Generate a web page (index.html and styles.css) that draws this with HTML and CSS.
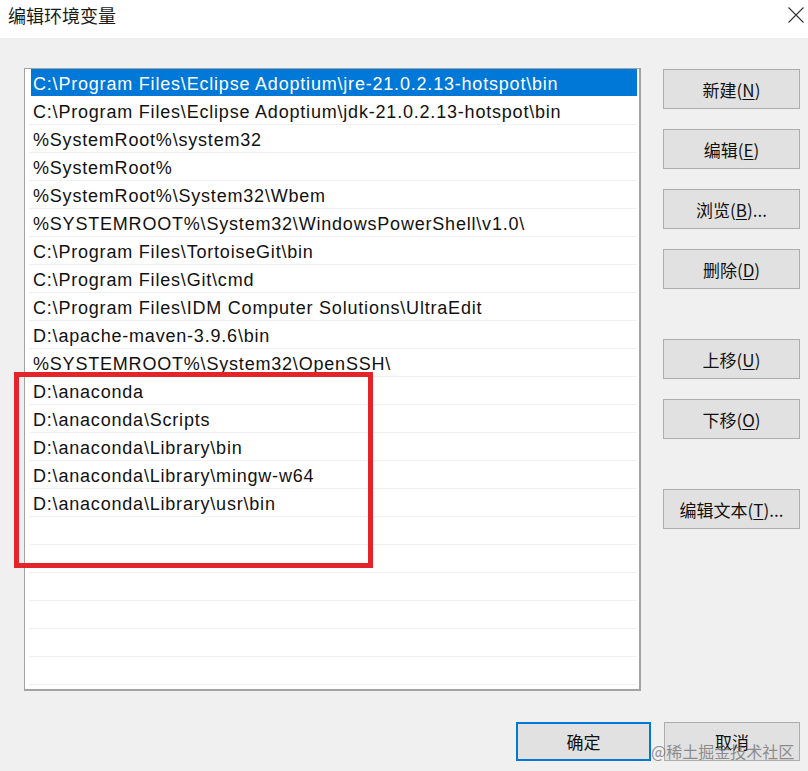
FILE: index.html
```html
<!DOCTYPE html>
<html lang="zh">
<head>
<meta charset="utf-8">
<title>编辑环境变量</title>
<link rel="stylesheet" href="styles.css">
</head>
<body>
<div class="window">
  <div class="titlebar">
    <span class="title">编辑环境变量</span>
    <svg class="close" width="16" height="16" viewBox="0 0 16 16"><path d="M0.5 0.5 L15.5 15.5 M15.5 0.5 L0.5 15.5" stroke="#333" stroke-width="1.1" fill="none"/></svg>
  </div>
  <div class="body">
    <div class="main">
      <div class="list">
        <div class="row selected">C:\Program Files\Eclipse Adoptium\jre-21.0.2.13-hotspot\bin</div>
        <div class="row">C:\Program Files\Eclipse Adoptium\jdk-21.0.2.13-hotspot\bin</div>
        <div class="row">%SystemRoot%\system32</div>
        <div class="row">%SystemRoot%</div>
        <div class="row">%SystemRoot%\System32\Wbem</div>
        <div class="row">%SYSTEMROOT%\System32\WindowsPowerShell\v1.0\</div>
        <div class="row">C:\Program Files\TortoiseGit\bin</div>
        <div class="row">C:\Program Files\Git\cmd</div>
        <div class="row">C:\Program Files\IDM Computer Solutions\UltraEdit</div>
        <div class="row">D:\apache-maven-3.9.6\bin</div>
        <div class="row">%SYSTEMROOT%\System32\OpenSSH\</div>
        <div class="row">D:\anaconda</div>
        <div class="row">D:\anaconda\Scripts</div>
        <div class="row">D:\anaconda\Library\bin</div>
        <div class="row">D:\anaconda\Library\mingw-w64</div>
        <div class="row">D:\anaconda\Library\usr\bin</div>
        <div class="row"></div>
        <div class="row"></div>
        <div class="row"></div>
        <div class="row"></div>
        <div class="row"></div>
        <div class="row"></div>
        <div class="row"></div>
      </div>
      <div class="buttons">
        <div class="group">
          <button class="btn">新建(<u>N</u>)</button>
          <button class="btn">编辑(<u>E</u>)</button>
          <button class="btn">浏览(<u>B</u>)...</button>
          <button class="btn">删除(<u>D</u>)</button>
        </div>
        <div class="group">
          <button class="btn">上移(<u>U</u>)</button>
          <button class="btn">下移(<u>O</u>)</button>
        </div>
        <div class="group">
          <button class="btn">编辑文本(<u>T</u>)...</button>
        </div>
      </div>
    </div>
    <div class="footer">
      <button class="btn default">确定</button>
      <button class="btn">取消</button>
    </div>
    <div class="highlight"></div>
    <div class="watermark">@稀土掘金技术社区</div>
  </div>
</div>
</body>
</html>
```
FILE: styles.css
```css
* { box-sizing: border-box; }
html, body {
  margin: 0;
  padding: 0;
  width: 808px;
  height: 771px;
  overflow: hidden;
  background: #f0f0f0;
}
.window {
  width: 808px;
  height: 771px;
  display: flex;
  flex-direction: column;
  font-family: "Liberation Sans", "Noto Sans CJK SC", sans-serif;
}
.titlebar {
  height: 38px;
  background: #ffffff;
  display: flex;
  align-items: center;
  justify-content: space-between;
  padding: 0 4px 0 8px;
  flex-shrink: 0;
}
.title {
  font-family: "Noto Sans CJK SC", sans-serif;
  font-size: 18px;
  color: #1a1a1a;
  margin-top: -9px;
}
.close {
  margin-top: -8px;
}
.body {
  position: relative;
  flex: 1;
  background: #f0f0f0;
  padding: 30px 0 0 24px;
}
.main {
  display: flex;
  gap: 22px;
  align-items: flex-start;
}
.list {
  width: 617px;
  height: 623px;
  background: #ffffff;
  border: 1px solid #a3a3a3;
  border-right-width: 2px;
  border-bottom-width: 2px;
  padding: 0 2px 0 4px;
  overflow: hidden;
}
.row {
  height: 28px;
  padding-top: 3px;
  line-height: 24px;
  font-size: 18px;
  letter-spacing: 0.8px;
  color: #111;
  padding-left: 4px;
  border-bottom: 1px solid #f0f0f0;
  white-space: nowrap;
}
.row.selected {
  background: #0078d7;
  color: #ffffff;
  margin-left: 2px;
  padding-left: 2px;
  border-bottom-color: #ffffff;
}
.buttons {
  display: flex;
  flex-direction: column;
  gap: 50px;
  padding-top: 1px;
}
.group {
  display: flex;
  flex-direction: column;
  gap: 20px;
}
.btn {
  width: 137px;
  height: 40px;
  background: #e1e1e1;
  border: 1px solid #adadad;
  border-radius: 0;
  font-family: "Noto Sans CJK SC", sans-serif;
  font-size: 17px;
  color: #111;
  padding: 0;
  margin: 0;
  display: flex;
  align-items: center;
  justify-content: center;
}
.btn u {
  text-underline-offset: 2px;
}
.footer {
  display: flex;
  justify-content: flex-end;
  gap: 13px;
  margin-top: 31px;
  padding-right: 8px;
}
.footer .btn {
  width: 136px;
  height: 39px;
}
.btn.default {
  width: 135px;
  border: 2px solid #0078d7;
}
.highlight {
  position: absolute;
  left: 14px;
  top: 334px;
  width: 359px;
  height: 196px;
  border: 5px solid #e3242b;
}
.watermark {
  position: absolute;
  left: 651px;
  top: 701px;
  font-family: "Noto Sans CJK SC", sans-serif;
  font-size: 16px;
  color: rgba(110, 110, 110, 0.75);
}
```
